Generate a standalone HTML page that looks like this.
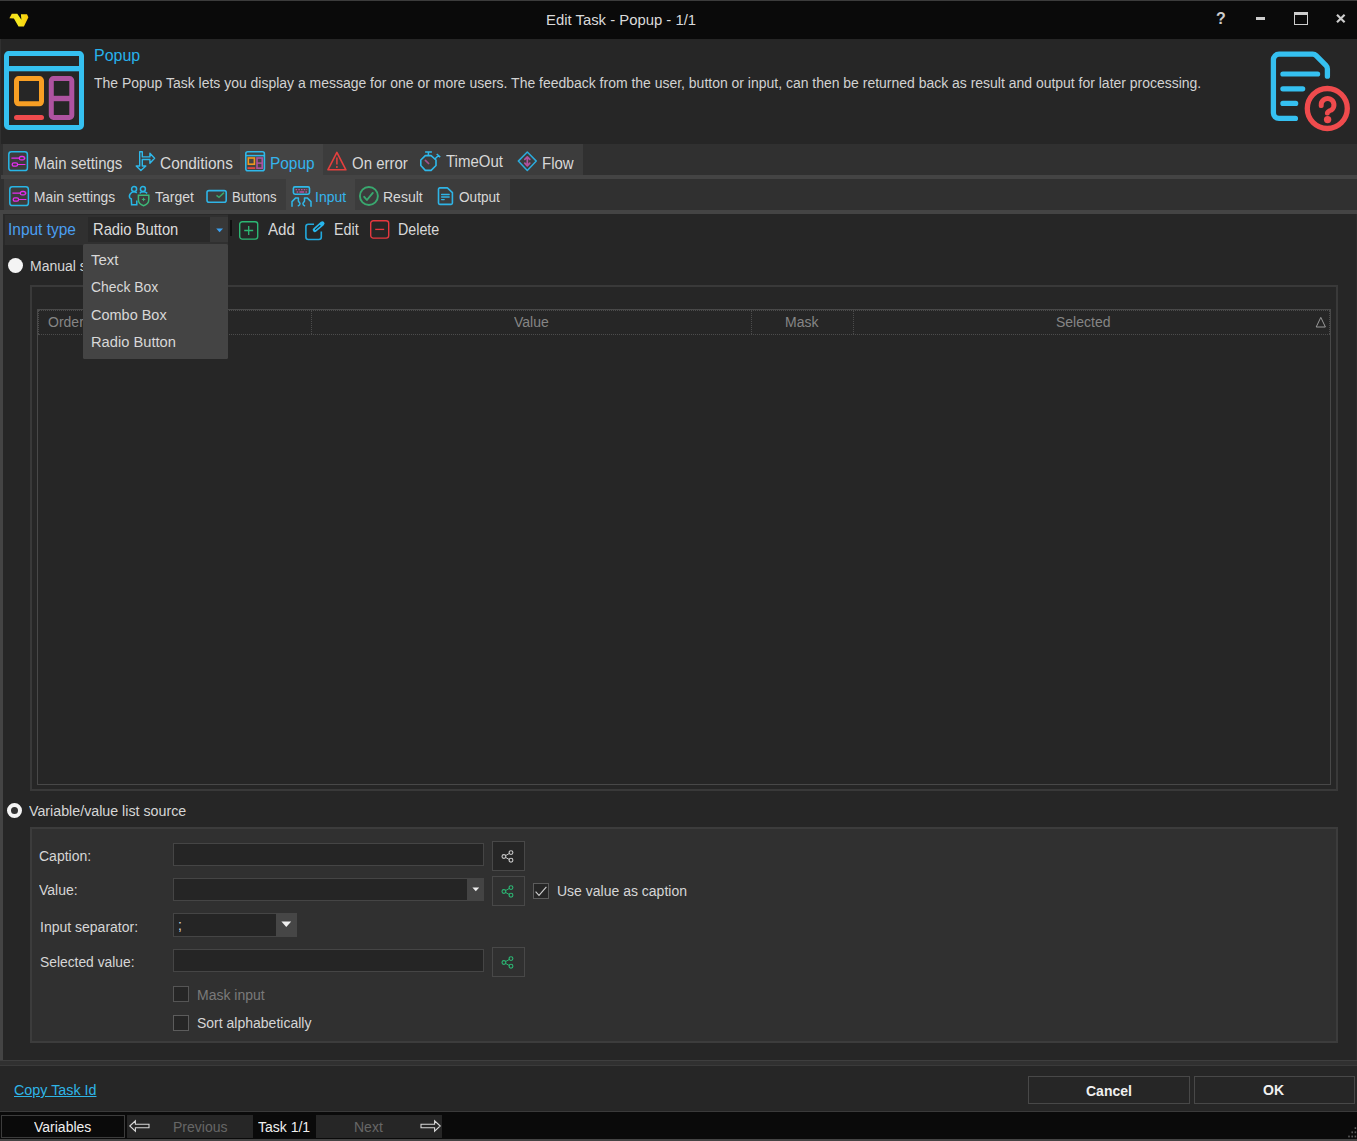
<!DOCTYPE html>
<html lang="en">
<head>
<meta charset="utf-8">
<title>Edit Task - Popup - 1/1</title>
<style>
html,body{margin:0;padding:0;}
body{width:1357px;height:1141px;overflow:hidden;background:#262626;position:relative;
 font-family:"Liberation Sans",sans-serif;color:#d8d8d8;font-size:14px;}
#win{position:absolute;left:0;top:0;width:1357px;height:1141px;background:#262626;overflow:hidden;}
.abs{position:absolute;}
.t{position:absolute;white-space:nowrap;line-height:20px;height:20px;}
svg{position:absolute;overflow:visible;}
/* title bar */
#titlebar{left:0;top:0;width:1357px;height:39px;background:#0a0a0a;}
#topline{left:0;top:0;width:1357px;height:1px;background:#3c3c3c;}
#leftline{left:0;top:39px;width:1px;height:171px;background:#303030;}
#rightline{left:1356px;top:214px;width:1px;height:846px;background:#2b2b2b;}
#bottomline{left:0;top:1139px;width:1357px;height:2px;background:#444444;}
/* tab strips */
.strip{background:#3c3c3c;}
.row{background:#303030;}
.band{background:#444444;}
.seltab{background:#444444;}
.f15{font-size:15px;}
.f14{font-size:14px;}
.blue{color:#35b4ee;}
/* group boxes */
.gb{border:2px solid #393939;box-sizing:border-box;}
.inp{background:#252525;border:1px solid #454545;box-sizing:border-box;}
.btn{background:#262626;border:1px solid #484848;box-sizing:border-box;}
.gh{color:#858585;}
.ddi{color:#d8d8d8;}
.lb{color:#d6d6d6;}
.chk{background:#262626;border:1px solid #5c5c5c;box-sizing:border-box;width:15px;height:15px;}
</style>
</head>
<body>
<div id="win">

<!-- TITLE BAR -->
<div id="titlebar" class="abs"></div>
<div id="topline" class="abs"></div>
<span class="t" id="title" style="left:546px;top:10px;color:#dadada;font-size:15.2px;transform:scaleX(0.9788);transform-origin:0 50%;">Edit Task - Popup - 1/1</span>

<svg style="left:0;top:0" width="40" height="39" viewBox="0 0 40 39">
 <defs><linearGradient id="lg" x1="0" x2="1" y1="0" y2="0"><stop offset="0" stop-color="#f8d612"/><stop offset="0.45" stop-color="#f4ea22"/><stop offset="0.62" stop-color="#f8e018"/><stop offset="1" stop-color="#fcc808"/></linearGradient></defs>
 <path d="M9.4 18.2 L11.8 13.7 H17.3 L21.4 19.8 L20.9 14.2 H27 L28.4 17.2 L23.9 26.6 H18.5 L13.9 18.5 Z" fill="url(#lg)"/>
</svg>
<span class="t" id="w-help" style="left:1216px;top:9px;font-size:16px;font-weight:700;color:#cdcdcd;letter-spacing:0;">?</span>
<div class="abs" style="left:1256px;top:17px;width:9px;height:3px;background:#cdcdcd;"></div>
<div class="abs" style="left:1294px;top:12px;width:14px;height:13px;border:1px solid #cdcdcd;border-top-width:3px;box-sizing:border-box;"></div>
<svg style="left:1336px;top:14px" width="10" height="9" viewBox="0 0 10 9"><path d="M1 0.8 L8.6 8.2 M8.6 0.8 L1 8.2" stroke="#cdcdcd" stroke-width="2.2" fill="none"/></svg>

<!-- HEADER -->
<span class="t" id="hdr-name" style="left:94px;top:46px;color:#27b2ec;font-size:16.6px;transform:scaleX(0.9642);transform-origin:0 50%;">Popup</span>
<span class="t" id="hdr-desc" style="left:94px;top:73px;color:#d2d2d2;font-size:14.7px;transform:scaleX(0.9508);transform-origin:0 50%;">The Popup Task lets you display a message for one or more users. The feedback from the user, button or input, can then be returned back as result and output for later processing.</span>

<!-- TAB STRIP 1 -->
<div class="abs row" style="left:1px;top:144px;width:1356px;height:31px;"></div>
<div class="abs strip" style="left:3px;top:144px;width:580px;height:31px;"></div>
<div class="abs seltab" style="left:240px;top:144px;width:83px;height:31px;"></div>
<div class="abs band" style="left:0px;top:175px;width:1357px;height:4px;"></div>

<!-- TAB STRIP 2 -->
<div class="abs row" style="left:1px;top:179px;width:1356px;height:31px;"></div>
<div class="abs strip" style="left:4px;top:179px;width:506px;height:31px;"></div>
<div class="abs seltab" style="left:286px;top:179px;width:69px;height:31px;"></div>
<div class="abs band" style="left:0px;top:210px;width:1357px;height:4px;"></div>
<div class="abs band" style="left:0px;top:210px;width:3px;height:851px;"></div>

<!-- TOOLBAR -->
<div class="abs" style="left:3px;top:214px;width:225px;height:31px;background:#303030;border-left:2px solid #292929;border-top:1px solid #292929;box-sizing:border-box;"></div>


<!-- big popup icon -->
<svg style="left:4px;top:51px" width="80" height="79" viewBox="0 0 80 79">
 <rect x="2.5" y="2.5" width="75" height="74" rx="2.2" fill="none" stroke="#35c0f0" stroke-width="5"/>
 <rect x="2.5" y="15" width="75" height="5.3" fill="#35c0f0"/>
 <rect x="12.5" y="27.5" width="25" height="25.3" rx="2.2" fill="none" stroke="#f89f24" stroke-width="5"/>
 <rect x="47.3" y="27.5" width="20.5" height="39" rx="2.2" fill="none" stroke="#ae53a0" stroke-width="5"/>
 <rect x="47.3" y="44.8" width="20.5" height="5.4" fill="#ae53a0"/>
 <rect x="10" y="64" width="30" height="5" rx="2.5" fill="#ef4b4d"/>
</svg>

<!-- help doc icon -->
<svg style="left:1270px;top:51px" width="80" height="80" viewBox="0 0 80 80">
 <path d="M25.4 67.4 H9 a5.6 5.6 0 0 1 -5.6 -5.6 V8.8 a5.6 5.6 0 0 1 5.6 -5.6 H42.6 a5 5 0 0 1 3.6 1.5 L55.9 14.4 a5 5 0 0 1 1.5 3.6 V25.2" fill="none" stroke="#35c0f0" stroke-width="5.3" stroke-linecap="round" stroke-linejoin="round"/>
 <path d="M12.9 23 H47.6 M12.9 37.8 H32.7 M12.9 52.4 H25.7" fill="none" stroke="#35c0f0" stroke-width="5.2" stroke-linecap="round"/>
 <circle cx="57.3" cy="57.5" r="20" fill="none" stroke="#ef4b4d" stroke-width="5.3"/>
 <path d="M51.2 54.6 A6.4 6.4 0 1 1 61.4 59 Q57.6 60.4 57.4 62" fill="none" stroke="#ef4b4d" stroke-width="5" stroke-linecap="round"/>
 <circle cx="57.6" cy="68.6" r="3.7" fill="#ef4b4d"/>
</svg>

<!-- strip1 icons/text -->
<svg style="left:8px;top:151px" width="20" height="20" viewBox="0 0 20 20">
 <rect x="0.8" y="0.8" width="18.6" height="18.8" rx="2.6" fill="none" stroke="#28b6e6" stroke-width="1.5"/>
 <path d="M3.4 7.2 H11 M16.6 7.2 H17.4 M9.8 13.5 H17.4" stroke="#e52df0" stroke-width="1.2" fill="none"/>
 <rect x="11.4" y="5.5" width="5" height="3.4" rx="1.5" fill="none" stroke="#e52df0" stroke-width="1.3"/>
 <rect x="4.2" y="11.8" width="5.4" height="3.4" rx="1.6" fill="none" stroke="#e52df0" stroke-width="1.3"/>
</svg>
<span class="t f15" id="s1a" style="left:34px;top:154px;font-size:15.8px;transform:scaleX(0.9495);transform-origin:0 50%;">Main settings</span>
<svg style="left:135px;top:151px" width="21" height="20" viewBox="0 0 21 20">
 <path d="M4.7 0.8 H7.3 V5.9 H14.9 V2.2 L19.6 7.2 L14.9 12.2 V8.5 H7.3 V15 H10.8 L5.9 19.4 L1.2 15 H4.7 Z" fill="none" stroke="#2fb8ea" stroke-width="1.4" stroke-linejoin="round"/>
</svg>
<span class="t f15" id="s1b" style="left:160px;top:154px;font-size:15.8px;transform:scaleX(0.9763);transform-origin:0 50%;">Conditions</span>
<svg style="left:245px;top:151px" width="20" height="21" viewBox="0 0 20 21">
 <rect x="0.8" y="0.8" width="18.6" height="19" rx="2" fill="none" stroke="#2fb8ea" stroke-width="1.6"/>
 <path d="M0.8 4.6 H19.4" stroke="#2fb8ea" stroke-width="1.5"/>
 <rect x="3.3" y="7" width="6.1" height="6.2" fill="none" stroke="#f2981f" stroke-width="1.6"/>
 <rect x="12" y="7" width="5.2" height="10.2" fill="none" stroke="#b0529f" stroke-width="1.6"/>
 <path d="M12 12.1 H17.2" stroke="#b0529f" stroke-width="1.5"/>
 <rect x="2.5" y="16.2" width="7.7" height="1.8" fill="#e0483f"/>
</svg>
<span class="t f15 blue" id="s1c" style="left:270px;top:154px;font-size:15.8px;transform:scaleX(0.9767);transform-origin:0 50%;">Popup</span>
<svg style="left:327px;top:151px" width="20" height="20" viewBox="0 0 20 20">
 <path d="M9.9 1.4 L18.9 18.8 H0.9 Z" fill="none" stroke="#e5403e" stroke-width="1.6" stroke-linejoin="round"/>
 <path d="M9.9 6.6 V13.4" stroke="#e5403e" stroke-width="1.5"/>
 <circle cx="9.9" cy="15.9" r="1" fill="#e5403e"/>
</svg>
<span class="t f15" id="s1d" style="left:352px;top:154px;font-size:15.8px;transform:scaleX(0.9495);transform-origin:0 50%;">On error</span>
<svg style="left:419px;top:151px" width="23" height="21" viewBox="0 0 23 21">
 <path d="M6.3 4.6 H12.1 L17 9 V14.5 L12.1 19.4 H6.3 L1.8 14.5 V9 Z" fill="none" stroke="#2fb8ea" stroke-width="1.6" stroke-linejoin="round"/>
 <path d="M6.1 0.9 H12.9 M9.4 0.9 V4.6 M15.6 8.3 L19.5 4.5 M17.7 3 L21.2 6.1" stroke="#2fb8ea" stroke-width="1.5" fill="none"/>
 <path d="M6.4 9.3 L9.6 12.5" stroke="#a4528f" stroke-width="1.7" stroke-linecap="round"/>
</svg>
<span class="t f15" id="s1e" style="left:446px;top:152px;font-size:15.8px;transform:scaleX(0.9495);transform-origin:0 50%;">TimeOut</span>
<svg style="left:517px;top:151px" width="21" height="21" viewBox="0 0 21 21">
 <path d="M10.3 1 L19.3 10.1 L10.3 19.4 L1.3 10.1 Z" fill="none" stroke="#2cabdc" stroke-width="1.5" stroke-linejoin="round"/>
 <path d="M10.3 6 V14.6 M7.8 8.4 L10.3 5.8 L12.8 8.4 M7.8 12.2 L10.3 14.8 L12.8 12.2" fill="none" stroke="#b0529f" stroke-width="1.7" stroke-linejoin="round" stroke-linecap="round"/>
</svg>
<span class="t f15" id="s1f" style="left:542px;top:154px;font-size:15.8px;transform:scaleX(0.9494);transform-origin:0 50%;">Flow</span>


<!-- strip2 icons/text -->
<svg style="left:9px;top:186px" width="20" height="20" viewBox="0 0 20 20">
 <rect x="0.8" y="0.8" width="18.6" height="18.8" rx="2.6" fill="none" stroke="#28b6e6" stroke-width="1.5"/>
 <path d="M3.4 7.2 H11 M16.6 7.2 H17.4 M9.8 13.5 H17.4" stroke="#e52df0" stroke-width="1.2" fill="none"/>
 <rect x="11.4" y="5.5" width="5" height="3.4" rx="1.5" fill="none" stroke="#e52df0" stroke-width="1.3"/>
 <rect x="4.2" y="11.8" width="5.4" height="3.4" rx="1.6" fill="none" stroke="#e52df0" stroke-width="1.3"/>
</svg>
<span class="t f14" id="s2a" style="left:34px;top:187px;font-size:14.7px;transform:scaleX(0.9381);transform-origin:0 50%;">Main settings</span>
<svg style="left:129px;top:186px" width="21" height="20" viewBox="0 0 21 20">
 <circle cx="5.1" cy="3" r="2.5" fill="none" stroke="#28b6e6" stroke-width="1.5"/>
 <circle cx="13.9" cy="3" r="2.5" fill="none" stroke="#28b6e6" stroke-width="1.5"/>
 <path d="M7.8 6.8 C6.2 5.5 4 5.5 2.6 6.5 C0.7 8 0.2 10 0.5 11.2 C0.7 12.2 1.6 12.7 2.3 12.9 L2.6 18.8 H7.8 V14.4" fill="none" stroke="#28b6e6" stroke-width="1.5"/>
 <path d="M10.8 7.4 C12 5.2 16 5.2 18.2 7.4" fill="none" stroke="#28b6e6" stroke-width="1.5"/>
 <path d="M9.4 9.3 H19.8 V13.5 C19.8 17 17 19 14.6 19.7 C12.2 19 9.4 17 9.4 13.5 Z" fill="none" stroke="#3cb878" stroke-width="1.5"/>
 <path d="M14.6 11.2 L15.3 12.7 L16.8 13.4 L15.3 14.1 L14.6 15.6 L13.9 14.1 L12.4 13.4 L13.9 12.7 Z" fill="#3cb878"/>
</svg>
<span class="t f14" id="s2b" style="left:155px;top:187px;font-size:14.7px;transform:scaleX(0.9533);transform-origin:0 50%;">Target</span>
<svg style="left:206px;top:190px" width="22" height="14" viewBox="0 0 22 14">
 <rect x="1" y="0.6" width="19.2" height="11.7" rx="2" fill="none" stroke="#2fb4e6" stroke-width="1.6"/>
 <path d="M10.5 5.4 L13 7.3 L18 2.6" fill="none" stroke="#3aa66c" stroke-width="1.5"/>
</svg>
<span class="t f14" id="s2c" style="left:232px;top:187px;font-size:14.7px;transform:scaleX(0.8943);transform-origin:0 50%;">Buttons</span>
<svg style="left:291px;top:186px" width="21" height="21" viewBox="0 0 21 21">
 <path d="M3.9 0.9 H17 a1.5 1.5 0 0 1 1.5 1.5 V6.6 a1.6 1.6 0 0 1 -1.6 1.6 H4 a1.6 1.6 0 0 1 -1.6 -1.6 V2.4 a1.5 1.5 0 0 1 1.5 -1.5 Z" fill="none" stroke="#2fb8ea" stroke-width="1.6"/>
 <path d="M4.6 3.6 H16.2" stroke="#b4509f" stroke-width="1.3" stroke-dasharray="1.6 1.1"/>
 <path d="M5.6 6 H7.2 M8.4 6 H13.2 M14.4 6 H16" stroke="#b4509f" stroke-width="1.4"/>
 <path d="M1 20.2 V15.6 L4.7 11.9 H7.4 V15 C7.6 16 9 16.6 9 17.6 C9 18.6 8.4 19.4 7.4 19.7 M20 20.2 V15.6 L16.2 11.9 H13.5 V15 C13.3 16 11.9 16.6 11.9 17.6 C11.9 18.6 12.5 19.4 13.5 19.7" fill="none" stroke="#2fb8ea" stroke-width="1.5" stroke-linejoin="round" stroke-linecap="round"/>
</svg>
<span class="t f14 blue" id="s2d" style="left:315px;top:187px;font-size:14.7px;transform:scaleX(0.9531);transform-origin:0 50%;">Input</span>
<svg style="left:359px;top:186px" width="20" height="20" viewBox="0 0 20 20">
 <circle cx="9.9" cy="10" r="9" fill="none" stroke="#39a86f" stroke-width="1.9"/>
 <path d="M5.2 10.8 L7.9 14 L13.8 6.9" fill="none" stroke="#39a86f" stroke-width="1.9" stroke-linecap="round" stroke-linejoin="round"/>
</svg>
<span class="t f14" id="s2e" style="left:383px;top:187px;font-size:14.7px;transform:scaleX(0.9531);transform-origin:0 50%;">Result</span>
<svg style="left:438px;top:187px" width="16" height="19" viewBox="0 0 16 19">
 <path d="M0.5 2.2 a1.3 1.3 0 0 1 1.3 -1.3 H9.4 L14.4 5.7 V16.1 a1.3 1.3 0 0 1 -1.3 1.3 H1.8 a1.3 1.3 0 0 1 -1.3 -1.3 Z" fill="none" stroke="#2fb4e6" stroke-width="1.6" stroke-linejoin="round"/>
 <path d="M3.6 7.5 H11.2 M3.6 10 H11.2 M3.6 12.6 H6.2" stroke="#2fb4e6" stroke-width="1.3" stroke-linecap="round"/>
</svg>
<span class="t f14" id="s2f" style="left:459px;top:187px;font-size:14.7px;transform:scaleX(0.9259);transform-origin:0 50%;">Output</span>

<!-- toolbar content -->
<span class="t f15" id="tb-l" style="left:8px;top:220px;color:#4a9ff0;font-size:15.7px;transform:scaleX(0.9853);transform-origin:0 50%;">Input type</span>
<div class="abs" style="left:88px;top:217px;width:122px;height:25px;background:#292929;"></div>
<div class="abs" style="left:210px;top:217px;width:18px;height:25px;background:#383838;"></div>
<span class="t f15" id="tb-c" style="left:92.5px;top:220px;color:#dcdcdc;font-size:15.7px;transform:scaleX(0.9404);transform-origin:0 50%;">Radio Button</span>
<svg style="left:216px;top:228px" width="8" height="5" viewBox="0 0 8 5"><path d="M0.2 0.4 H7 L3.6 4.2 Z" fill="#3aa0f0"/></svg>
<div class="abs" style="left:230px;top:220px;width:2px;height:16px;background:#101010;"></div>
<svg style="left:239px;top:221px" width="20" height="19" viewBox="0 0 20 19">
 <rect x="0.7" y="0.7" width="18" height="17.4" rx="2.6" fill="none" stroke="#2cb673" stroke-width="1.4"/>
 <path d="M9.7 5 V14 M5.2 9.5 H14.2" stroke="#2cb673" stroke-width="1.3"/>
</svg>
<span class="t f15" id="tb-add" style="left:268px;top:220px;font-size:15.7px;transform:scaleX(0.9670);transform-origin:0 50%;">Add</span>
<svg style="left:305px;top:220px" width="21" height="20" viewBox="0 0 21 20">
 <path d="M9 4.2 H3.3 a2.4 2.4 0 0 0 -2.4 2.4 V17.1 a2.4 2.4 0 0 0 2.4 2.4 H13.9 a2.4 2.4 0 0 0 2.4 -2.4 V11.4" fill="none" stroke="#22a8dc" stroke-width="1.6"/>
 <path d="M9.9 9.9 L17.3 3.5" stroke="#27b6ec" stroke-width="4.4" stroke-linecap="round" fill="none"/>
 <path d="M10.5 9.4 L15 5.5" stroke="#262626" stroke-width="1.1" stroke-linecap="round" fill="none"/>
</svg>
<span class="t f15" id="tb-edit" style="left:334px;top:220px;font-size:15.7px;transform:scaleX(0.9116);transform-origin:0 50%;">Edit</span>
<svg style="left:370px;top:220px" width="20" height="19" viewBox="0 0 20 19">
 <rect x="0.7" y="0.7" width="18" height="17.4" rx="2.6" fill="none" stroke="#e5383f" stroke-width="1.4"/>
 <path d="M5.2 9.4 H14.2" stroke="#e5383f" stroke-width="1.3"/>
</svg>
<span class="t f15" id="tb-del" style="left:398px;top:220px;font-size:15.7px;transform:scaleX(0.9097);transform-origin:0 50%;">Delete</span>


<!-- manual source radio + group box -->
<div class="abs" style="left:8px;top:258px;width:15px;height:15px;border-radius:50%;background:#f4f4f4;"></div>
<span class="t f14" id="r1" style="left:30px;top:256px;color:#d6d6d6;font-size:14.7px;transform:scaleX(0.9531);transform-origin:0 50%;">Manual source</span>
<div class="abs gb" style="left:30px;top:285px;width:1308px;height:506px;"></div>
<div class="abs" id="grid" style="left:37px;top:309px;width:1294px;height:476px;border:1px solid #484848;box-sizing:border-box;"></div>
<div class="abs" style="left:38px;top:310px;width:1292px;height:0;border-top:1px dotted #4c4c4c;"></div>
<div class="abs" style="left:38px;top:334px;width:1292px;height:0;border-top:1px dotted #4c4c4c;"></div>
<div class="abs" style="left:38px;top:310px;width:0;height:24px;border-left:1px dotted #4c4c4c;"></div>
<div class="abs" style="left:311px;top:310px;width:0;height:24px;border-left:1px dotted #4c4c4c;"></div>
<div class="abs" style="left:751px;top:310px;width:0;height:24px;border-left:1px dotted #4c4c4c;"></div>
<div class="abs" style="left:853px;top:310px;width:0;height:24px;border-left:1px dotted #4c4c4c;"></div>
<div class="abs" style="left:1329px;top:310px;width:0;height:24px;border-left:1px dotted #4c4c4c;"></div>
<span class="t f14 gh" id="g1" style="left:48px;top:312px;font-size:14.7px;transform:scaleX(0.9534);transform-origin:0 50%;">Order</span>
<span class="t f14 gh" id="g2" style="left:514px;top:312px;font-size:14.7px;transform:scaleX(0.9533);transform-origin:0 50%;">Value</span>
<span class="t f14 gh" id="g3" style="left:785px;top:312px;font-size:14.7px;transform:scaleX(0.9533);transform-origin:0 50%;">Mask</span>
<span class="t f14 gh" id="g4" style="left:1056px;top:312px;font-size:14.7px;transform:scaleX(0.9530);transform-origin:0 50%;">Selected</span>
<svg style="left:1315px;top:316px" width="12" height="12" viewBox="0 0 12 12"><path d="M5.8 1.4 L10.4 11 H1.2 Z" fill="none" stroke="#9a9a9a" stroke-width="1"/></svg>

<!-- dropdown list -->
<div class="abs" id="dd" style="left:83px;top:244px;width:145px;height:115px;background:#444444;border-radius:1.5px;"></div>
<span class="t f15 ddi" id="d1" style="left:90.5px;top:250px;font-size:15.4px;transform:scaleX(0.9745);transform-origin:0 50%;">Text</span>
<span class="t f15 ddi" id="d2" style="left:90.5px;top:277px;font-size:15.4px;transform:scaleX(0.9045);transform-origin:0 50%;">Check Box</span>
<span class="t f15 ddi" id="d3" style="left:90.5px;top:305px;font-size:15.4px;transform:scaleX(0.9409);transform-origin:0 50%;">Combo Box</span>
<span class="t f15 ddi" id="d4" style="left:90.5px;top:332px;font-size:15.4px;transform:scaleX(0.9544);transform-origin:0 50%;">Radio Button</span>

<!-- variable/value list source -->
<div class="abs" style="left:7px;top:803px;width:15px;height:15px;border-radius:50%;background:#333333;border:4.5px solid #f4f4f4;box-sizing:border-box;"></div>
<span class="t f14" id="r2" style="left:29px;top:801px;color:#d6d6d6;font-size:14.7px;transform:scaleX(0.9693);transform-origin:0 50%;">Variable/value list source</span>
<div class="abs gb" style="left:30px;top:827px;width:1308px;height:216px;background:#303030;border-color:#3c3c3c;"></div>

<span class="t f14 lb" id="l1" style="left:39px;top:846px;font-size:14.7px;transform:scaleX(0.9532);transform-origin:0 50%;">Caption:</span>
<div class="abs inp" style="left:173px;top:843px;width:311px;height:23px;"></div>
<div class="abs btn" style="left:492px;top:841px;width:33px;height:30px;background:#262626;"></div>
<svg style="left:501px;top:850px" width="14" height="13" viewBox="0 0 14 13"><path d="M4.6 5.6 L8.4 3.4 M4.6 7.4 L8.4 9.6" stroke="#c8c8c8" stroke-width="1" fill="none"/><circle cx="2.9" cy="6.5" r="1.9" fill="none" stroke="#c8c8c8" stroke-width="1.1"/><circle cx="10" cy="2.6" r="1.9" fill="none" stroke="#c8c8c8" stroke-width="1.1"/><circle cx="10" cy="10.2" r="1.9" fill="none" stroke="#c8c8c8" stroke-width="1.1"/></svg>

<span class="t f14 lb" id="l2" style="left:39px;top:880px;font-size:14.7px;transform:scaleX(0.9534);transform-origin:0 50%;">Value:</span>
<div class="abs inp" style="left:173px;top:878px;width:311px;height:23px;"></div>
<div class="abs" style="left:467px;top:878px;width:17px;height:23px;background:#444444;"></div>
<svg style="left:472px;top:887px" width="8" height="5" viewBox="0 0 8 5"><path d="M0.4 0.4 H7.2 L3.8 4.2 Z" fill="#f0f0f0"/></svg>
<div class="abs btn" style="left:492px;top:876px;width:33px;height:30px;background:#303030;"></div>
<svg style="left:501px;top:885px" width="14" height="13" viewBox="0 0 14 13"><path d="M4.6 5.6 L8.4 3.4 M4.6 7.4 L8.4 9.6" stroke="#2cb673" stroke-width="1" fill="none"/><circle cx="2.9" cy="6.5" r="1.9" fill="none" stroke="#2cb673" stroke-width="1.1"/><circle cx="10" cy="2.6" r="1.9" fill="none" stroke="#2cb673" stroke-width="1.1"/><circle cx="10" cy="10.2" r="1.9" fill="none" stroke="#2cb673" stroke-width="1.1"/></svg>
<div class="abs chk" style="left:533px;top:883px;width:16px;height:16px;"></div>
<svg style="left:533px;top:883px" width="16" height="16" viewBox="0 0 16 16"><path d="M2.6 8.6 L6 12.4 L13.4 3.8" fill="none" stroke="#cfcfcf" stroke-width="1.1"/></svg>
<span class="t f14" id="c1" style="left:557px;top:881px;color:#d6d6d6;font-size:14.7px;transform:scaleX(0.9531);transform-origin:0 50%;">Use value as caption</span>

<span class="t f14 lb" id="l3" style="left:40px;top:917px;font-size:14.7px;transform:scaleX(0.9531);transform-origin:0 50%;">Input separator:</span>
<div class="abs inp" style="left:173px;top:913px;width:124px;height:24px;"></div>
<div class="abs" style="left:276px;top:913px;width:21px;height:24px;background:#464646;"></div>
<svg style="left:281px;top:921px" width="11" height="7" viewBox="0 0 11 7"><path d="M0.4 0.6 H10.2 L5.3 6 Z" fill="#f0f0f0"/></svg>
<span class="t f14" id="sep" style="left:178px;top:915px;color:#d6d6d6;font-size:14.7px;transform:scaleX(0.9504);transform-origin:0 50%;">;</span>

<span class="t f14 lb" id="l4" style="left:40px;top:952px;font-size:14.7px;transform:scaleX(0.9412);transform-origin:0 50%;">Selected value:</span>
<div class="abs inp" style="left:173px;top:949px;width:311px;height:23px;"></div>
<div class="abs btn" style="left:492px;top:947px;width:33px;height:30px;background:#303030;"></div>
<svg style="left:501px;top:956px" width="14" height="13" viewBox="0 0 14 13"><path d="M4.6 5.6 L8.4 3.4 M4.6 7.4 L8.4 9.6" stroke="#2cb673" stroke-width="1" fill="none"/><circle cx="2.9" cy="6.5" r="1.9" fill="none" stroke="#2cb673" stroke-width="1.1"/><circle cx="10" cy="2.6" r="1.9" fill="none" stroke="#2cb673" stroke-width="1.1"/><circle cx="10" cy="10.2" r="1.9" fill="none" stroke="#2cb673" stroke-width="1.1"/></svg>

<div class="abs chk" style="left:173px;top:986px;width:16px;height:16px;border-color:#555;"></div>
<span class="t f14" id="c2" style="left:197px;top:985px;color:#7a7a7a;font-size:14.7px;transform:scaleX(0.9531);transform-origin:0 50%;">Mask input</span>
<div class="abs chk" style="left:173px;top:1015px;width:16px;height:16px;"></div>
<span class="t f14" id="c3" style="left:197px;top:1013px;color:#d6d6d6;font-size:14.7px;transform:scaleX(0.9531);transform-origin:0 50%;">Sort alphabetically</span>

<!-- bottom separators -->
<div class="abs" style="left:0px;top:1060px;width:1357px;height:6px;background:#303030;border-top:1px solid #3e3e3e;border-bottom:1px solid #3a3a3a;box-sizing:border-box;"></div>
<span class="t f14" id="copy" style="left:14px;top:1080px;color:#2fb4e6;text-decoration:underline;font-size:14.7px;transform:scaleX(0.9745);transform-origin:0 50%;">Copy Task Id</span>
<div class="abs btn" style="left:1028px;top:1076px;width:162px;height:28px;"></div>
<div class="abs btn" style="left:1194px;top:1076px;width:161px;height:28px;"></div>
<span class="t f14" id="b-cancel" style="left:1086px;top:1081px;color:#f0f0f0;font-weight:700;font-size:14.7px;transform:scaleX(0.9533);transform-origin:0 50%;">Cancel</span>
<span class="t f14" id="b-ok" style="left:1263px;top:1080px;color:#f0f0f0;font-weight:700;font-size:14.7px;transform:scaleX(0.9532);transform-origin:0 50%;">OK</span>
<div class="abs" style="left:0;top:1111px;width:1357px;height:1px;background:#3a3a3a;"></div>
<!-- FOOTER -->
<div class="abs" style="left:0;top:1112px;width:1357px;height:27px;background:#0a0a0a;"></div>


<div class="abs" style="left:1px;top:1115px;width:124px;height:23px;background:#0a0a0a;border:1px solid #3c3c3c;box-sizing:border-box;"></div>
<span class="t f14" id="f-var" style="left:34px;top:1117px;color:#f0f0f0;font-size:14.7px;transform:scaleX(0.9532);transform-origin:0 50%;">Variables</span>
<div class="abs" style="left:127px;top:1115px;width:126px;height:23px;background:#262626;"></div>
<div class="abs" style="left:316px;top:1115px;width:126px;height:23px;background:#262626;"></div>
<svg style="left:129px;top:1120px" width="21" height="12" viewBox="0 0 21 12"><path d="M0.8 6 L6.4 0.8 V4.2 H20 V7.8 H6.4 V11.2 Z" fill="none" stroke="#d8d8d8" stroke-width="1.1"/></svg>
<span class="t f14" id="f-prev" style="left:173px;top:1117px;color:#666666;font-size:14.7px;transform:scaleX(0.9530);transform-origin:0 50%;">Previous</span>
<span class="t f14" id="f-task" style="left:258px;top:1117px;color:#f0f0f0;font-size:14.7px;transform:scaleX(0.9532);transform-origin:0 50%;">Task 1/1</span>
<span class="t f14" id="f-next" style="left:354px;top:1117px;color:#666666;font-size:14.7px;transform:scaleX(0.9534);transform-origin:0 50%;">Next</span>
<svg style="left:420px;top:1120px" width="21" height="12" viewBox="0 0 21 12"><path d="M20.2 6 L14.6 0.8 V4.2 H1 V7.8 H14.6 V11.2 Z" fill="none" stroke="#d8d8d8" stroke-width="1.1"/></svg>
<svg style="left:1345px;top:1126px" width="12" height="13" viewBox="0 0 12 13"><g fill="#5a5a5a"><rect x="9.6" y="1.2" width="1.6" height="1.8"/><rect x="6.4" y="5.4" width="1.6" height="1.8"/><rect x="9.6" y="5.4" width="1.6" height="1.8"/><rect x="3.2" y="9.6" width="1.6" height="1.8"/><rect x="6.4" y="9.6" width="1.6" height="1.8"/><rect x="9.6" y="9.6" width="1.6" height="1.8"/></g></svg>
<div id="leftline" class="abs"></div>
<div id="rightline" class="abs"></div>
<div id="bottomline" class="abs"></div>
</div>
</body>
</html>
